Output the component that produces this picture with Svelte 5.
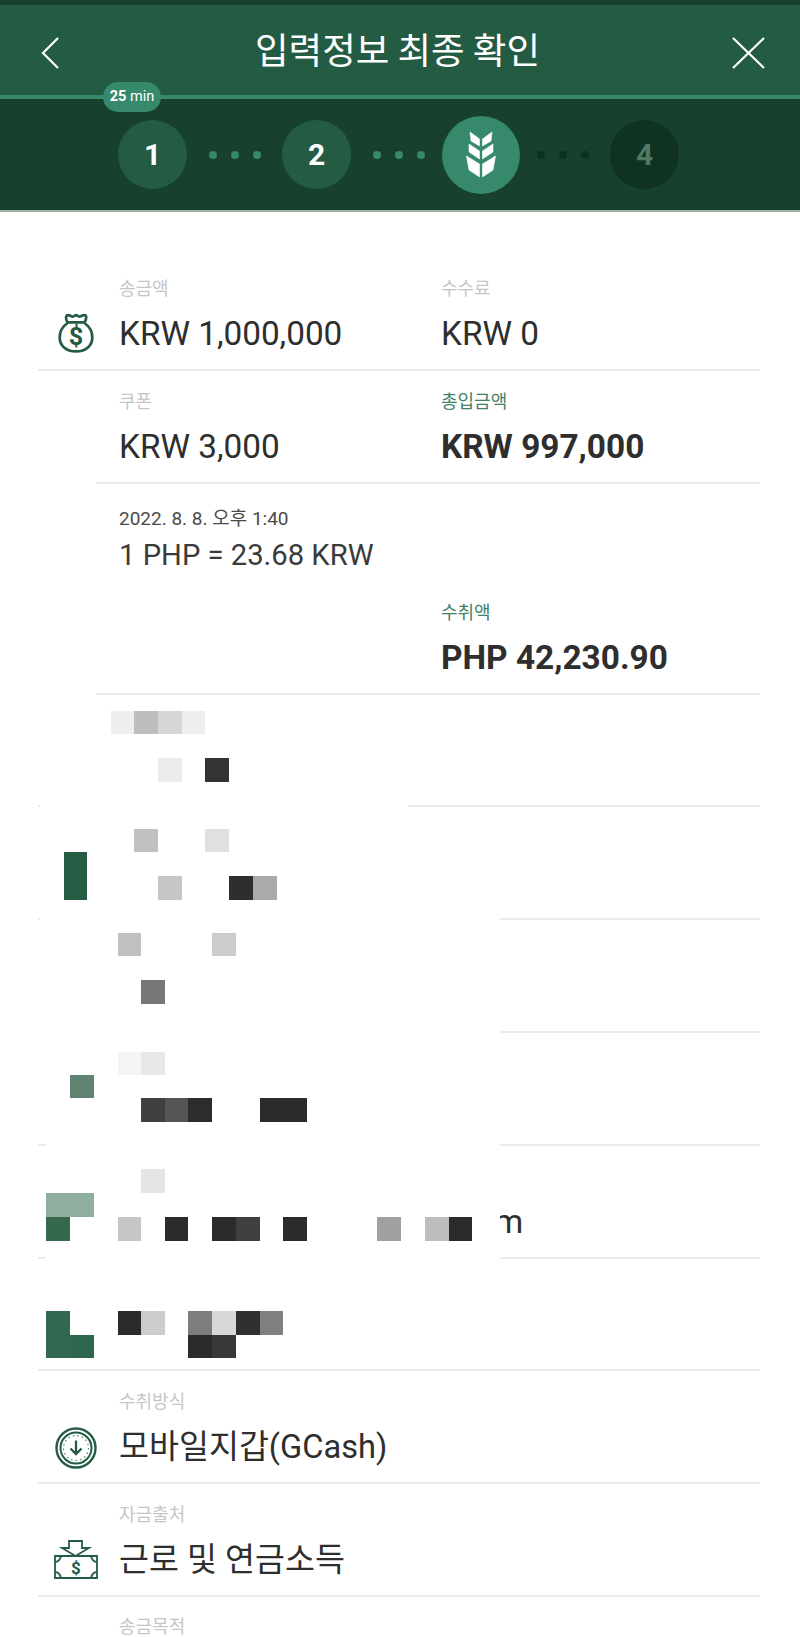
<script>
  const blocks = [
    [111,711,23,23,'#eeeeee'],[134,711,24,23,'#bdbdbd'],[158,711,24,23,'#d6d6d6'],[182,711,23,23,'#eeeeee'],
    [158,758,24,24,'#ebebeb'],[205,758,24,24,'#333333'],
    [134,829,24,23,'#c0c0c0'],[205,829,24,23,'#e0e0e0'],
    [64,852,23,48,'#265c43'],
    [158,876,24,24,'#c6c6c6'],[229,876,24,24,'#2e2e2e'],[253,876,24,24,'#aaaaaa'],
    [118,933,23,23,'#c0c0c0'],[212,933,24,23,'#cccccc'],[141,980,24,24,'#777777'],
    [118,1052,23,23,'#f5f5f5'],[141,1052,24,23,'#e8e8e8'],[70,1075,24,23,'#608271'],
    [141,1098,24,24,'#404040'],[165,1098,23,24,'#555555'],[188,1098,24,24,'#2c2c2c'],[260,1098,47,24,'#2b2b2b'],
    [141,1169,24,24,'#e5e5e5'],[46,1193,48,24,'#90ae9e'],[46,1217,24,24,'#35684f'],
    [118,1217,23,24,'#c6c6c6'],[165,1217,23,24,'#2b2b2b'],[212,1217,24,24,'#2b2b2b'],[236,1217,24,24,'#404040'],
    [283,1217,24,24,'#2b2b2b'],[377,1217,24,24,'#a0a0a0'],[425,1217,24,24,'#bdbdbd'],[449,1217,23,24,'#2b2b2b'],
    [118,1311,23,24,'#2b2b2b'],[141,1311,24,24,'#cccccc'],[188,1311,24,24,'#7d7d7d'],[212,1311,24,24,'#d8d8d8'],
    [236,1311,24,24,'#2f2f2f'],[260,1311,23,24,'#808080'],[188,1335,24,23,'#2b2b2b'],[212,1335,24,23,'#383838'],
    [46,1311,24,47,'#326850'],[70,1335,24,23,'#2f6650']
  ];
  const masks = [
    [40,800,368,10],[40,913,460,10],[38,1026,462,10],[46,1139,454,10],[46,1205,454,50],[46,1252,454,10]
  ];
  const rowsRedacted = [0,1,2,3];
</script>

<div class="page">
  <header>
    <nav>
      <svg class="nav-icon back" viewBox="0 0 18 32" aria-label="back"><path d="M17 1 2 16l15 15" /></svg>
      <h1>입력정보 최종 확인</h1>
      <svg class="nav-icon close" viewBox="0 0 33 32" aria-label="close"><path d="M1 1l31 30M32 1 1 31" /></svg>
    </nav>
    <div class="progress"><span class="pill"><b>25</b> min</span></div>
    <div class="steps">
      <span class="step done">1</span>
      <span class="dots"><i></i><i></i><i></i></span>
      <span class="step done">2</span>
      <span class="dots"><i></i><i></i><i></i></span>
      <span class="step current">
        <svg viewBox="0 0 30 47" width="30" height="47">
          <g fill="#fff" stroke="#fff" stroke-width=".6" stroke-linejoin="round">
            <path d="M4 1l9.500 7v7L5 10Z" /><path d="M26 1 16.500 8v7l8.500-5Z" />
            <path d="M3 13l10.500 7v8L3 21Z" /><path d="M27 13 16.500 20v8l10.500-7Z" />
            <path d="M.5 25 13.500 33v13L3 39Z" /><path d="M29.500 25 16.500 33v13l10.500-7Z" />
          </g>
        </svg>
      </span>
      <span class="dots off"><i></i><i></i><i></i></span>
      <span class="step todo">4</span>
    </div>
  </header>

  <main>
    <section class="row">
      <svg class="icon bag" viewBox="0 0 34 38">
        <g fill="none" stroke="#245c43" stroke-width="2.6" stroke-linejoin="round">
          <path d="M9 9C7 6 7 2 9.500 2c2 0 3 1.400 4.500 1.400S16 2 17 2s2.500 1.400 3.500 1.400S23 2 25 2c2.500 0 2 4 0 7Z" />
          <path d="M9 9.500C4 13 1.500 18 1.500 23c0 8 6 13.500 15.500 13.500S32.500 31 32.500 23c0-5-2.500-10-7.500-13.500" />
        </g>
        <text x="17" y="30" text-anchor="middle" class="dollar">$</text>
      </svg>
      <div class="cell c2"><div class="label">송금액</div><div class="value">KRW 1,000,000</div></div>
      <div class="cell c3"><div class="label">수수료</div><div class="value">KRW 0</div></div>
    </section>

    <section class="row inset">
      <div class="cell c2"><div class="label">쿠폰</div><div class="value">KRW 3,000</div></div>
      <div class="cell c3"><div class="label accent">총입금액</div><div class="value strong">KRW 997,000</div></div>
    </section>

    <section class="row inset tall">
      <div class="rate">
        <div class="date">2022. 8. 8. 오후 1:40</div>
        <div class="fx">1 PHP = 23.68 KRW</div>
      </div>
      <div class="cell c3 second"><div class="label accent">수취액</div><div class="value strong">PHP 42,230.90</div></div>
    </section>

    {#each rowsRedacted as r (r)}
      <section class="row"></section>
    {/each}
    <section class="row"><div class="cell c2"><div class="label">&nbsp;</div><div class="value tail">m</div></div></section>
    <section class="row"></section>

    <section class="row">
      <svg class="icon clock" viewBox="0 0 42 42">
        <g fill="none" stroke="#245c43">
          <circle cx="21" cy="21" r="19.500" stroke-width="2.400" />
          <circle cx="21" cy="21" r="15.500" stroke-width="2" />
          <circle cx="21" cy="21" r="12.500" stroke-width="1.200" stroke-dasharray="1.600 3" opacity=".75" />
          <path d="M21 13.500V27M15.500 21.500 21 27l5.500-5.500" stroke-width="2.300" />
        </g>
      </svg>
      <div class="cell c2 wide"><div class="label">수취방식</div><div class="value cjk">모바일지갑(GCash)</div></div>
    </section>

    <section class="row">
      <svg class="icon cash" viewBox="0 0 44 40">
        <g fill="none" stroke="#245c43" stroke-width="1.800">
          <path d="M15 1h13v7h7L21.500 16 8 8h7Z" />
          <path d="M1 16h42v22H1Z" />
          <path d="M1 22c3 0 5-2 6-6M43 22c-3 0-5-2-6-6M1 32c3 0 5 2 6 6M43 32c-3 0-5 2-6 6" />
        </g>
        <text x="22" y="33.500" text-anchor="middle" class="dollar small">$</text>
      </svg>
      <div class="cell c2 wide"><div class="label">자금출처</div><div class="value cjk">근로 및 연금소득</div></div>
    </section>

    <section class="row last">
      <div class="cell c2"><div class="label">송금목적</div></div>
    </section>
  </main>

  <div class="redaction" aria-hidden="true">
    {#each masks as m}
      <span class="mask" style="left:{m[0]}px;top:{m[1]}px;width:{m[2]}px;height:{m[3]}px"></span>
    {/each}
    {#each blocks as b}
      <span class="block" style="left:{b[0]}px;top:{b[1]}px;width:{b[2]}px;height:{b[3]}px;background:{b[4]}"></span>
    {/each}
  </div>
</div>

<style>
  :global(body) {
    margin: 0;
    background: #fff;
  }
  .page {
    position: relative;
    width: 800px;
    height: 1637px;
    overflow: hidden;
    background: #fff;
    color: #2e2e2e;
    font-family: Roboto, "Noto Sans CJK KR", sans-serif;
  }
  header {
    background: #17412c;
    padding-top: 5px;
    border-bottom: 2px solid #9db5a8;
  }
  nav {
    box-sizing: border-box;
    height: 90px;
    background: #245c43;
    display: flex;
    align-items: center;
    justify-content: space-between;
    padding: 5px 35px 0 41px;
  }
  h1 {
    margin: -6px 0 0 4px;
    color: #fff;
    font-size: 36.500px;
    font-weight: 400;
    line-height: 1;
    font-family: "Noto Sans CJK KR", sans-serif;
  }
  .nav-icon {
    height: 32px;
    fill: none;
    stroke: #fff;
    stroke-width: 2.200;
  }
  .back { width: 18px; }
  .close { width: 33px; }
  .progress {
    position: relative;
    height: 4px;
    background: #36896a;
  }
  .pill {
    position: absolute;
    left: 103px;
    top: -13px;
    width: 58px;
    height: 30px;
    border-radius: 15px;
    background: #36896a;
    color: #fff;
    font-size: 14.500px;
    line-height: 30px;
    text-align: center;
    white-space: nowrap;
  }
  .pill b { font-weight: 700; }
  .steps {
    height: 111px;
    display: flex;
    align-items: center;
    padding-left: 118px;
  }
  .step {
    width: 69px;
    height: 69px;
    border-radius: 50%;
    display: flex;
    align-items: center;
    justify-content: center;
    font-size: 30px;
    font-weight: 700;
    flex: none;
  }
  .done { background: #245c43; color: #fff; }
  .current {
    width: 78px;
    height: 78px;
    background: #36896a;
  }
  .todo { background: #103321; color: #4f7a66; }
  .dots {
    width: 95px;
    display: flex;
    justify-content: center;
    gap: 14px;
    flex: none;
  }
  .current + .dots { width: 86px; }
  .step + .dots + .current { margin-left: -4px; }
  .dots i {
    width: 8px;
    height: 8px;
    border-radius: 50%;
    background: #36896a;
  }
  .dots.off i { background: #0f3120; }
  .todo { margin-left: 4px; }

  main { padding-top: 46px; }
  .row {
    box-sizing: border-box;
    height: 112.800px;
    width: 722px;
    margin-left: 38px;
    border-bottom: 2px solid #ececec;
    display: grid;
    grid-template-columns: 81px 322px 1fr;
    position: relative;
  }
  .row.inset {
    width: 664px;
    margin-left: 96px;
    grid-template-columns: 23px 322px 1fr;
  }
  .row.tall {
    height: 211px;
    grid-template-rows: 98px 1fr;
  }
  .row.last {
    height: 41px;
    border-bottom: 0;
  }
  .cell { padding-top: 20px; }
  .last .cell { padding-top: 20px; }
  .last .label { line-height: 20px; }
  .c2 { grid-column: 2; grid-row: 1; }
  .c3 { grid-column: 3; grid-row: 1; }
  .wide { grid-column: 2 / 4; }
  .c3.second { grid-row: 2; }
  .label {
    color: #c6c6c6;
    font-size: 18px;
    line-height: 22px;
  }
  .accent { color: #3f8268; }
  .value {
    margin-top: 11px;
    font-size: 33.300px;
    line-height: 46px;
    white-space: nowrap;
  }
  .cjk { font-size: 32.600px; }
  .strong { font-weight: 700; font-size: 33.400px; }
  .tail { margin-left: 375px; }
  .rate {
    grid-column: 2 / 4;
    grid-row: 1;
    padding-top: 24px;
  }
  .date {
    font-size: 19px;
    line-height: 22px;
    color: #4a4a4a;
  }
  .fx {
    margin-top: 7px;
    font-size: 29.200px;
    line-height: 36px;
    color: #3a3a3a;
  }
  .icon {
    grid-column: 1;
    grid-row: 1;
    display: block;
    align-self: start;
  }
  .bag { width: 36px; height: 40px; margin: 55px 0 0 20px; }
  .clock { width: 42px; height: 42px; margin: 56px 0 0 17px; }
  .cash { width: 44px; height: 40px; margin: 56px 0 0 16px; }
  .dollar {
    font-family: Roboto, sans-serif;
    font-weight: 700;
    font-size: 24px;
    fill: #245c43;
  }
  .dollar.small { font-size: 17px; }
  .redaction {
    position: absolute;
    inset: 0;
    pointer-events: none;
  }
  .mask, .block { position: absolute; display: block; }
  .mask { background: #fff; }
</style>
